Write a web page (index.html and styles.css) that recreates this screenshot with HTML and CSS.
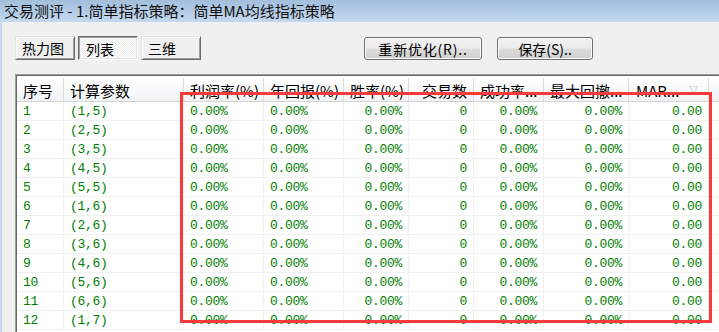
FILE: index.html
```html
<!DOCTYPE html>
<html lang="zh-CN">
  <head>
    <meta charset="UTF-8" />
    <title>交易测评</title>
    <link rel="stylesheet" href="styles.css">
  </head>
  <body>
    <div class="titlebar">交易测评 - 1.简单指标策略：简单MA均线指标策略</div>

    <div class="frame">
      <div class="toolbar">
        <button class="tab">热力图</button>
        <button class="tab tab-on">列表</button>
        <button class="tab">三维</button>
        <button class="btn btn-redo">重新优化(R)..</button>
        <button class="btn btn-save">保存(S)..</button>
      </div>

      <div class="list">
        <div class="row head">
          <div class="c">序号</div>
          <div class="c">计算参数</div>
          <div class="c">利润率(%)</div>
          <div class="c">年回报(%)</div>
          <div class="c r">胜率(%)</div>
          <div class="c r">交易数</div>
          <div class="c">成功率...</div>
          <div class="c">最大回撤...</div>
          <div class="c sort">MAR...<span class="arrow">▽</span></div>
          <div class="c"></div>
        </div>

        <div class="row"><div class="c">1</div><div class="c">(1,5)</div><div class="c">0.00%</div><div class="c">0.00%</div><div class="c r">0.00%</div><div class="c r">0</div><div class="c r">0.00%</div><div class="c r">0.00%</div><div class="c r">0.00</div><div class="c"></div></div>
        <div class="row"><div class="c">2</div><div class="c">(2,5)</div><div class="c">0.00%</div><div class="c">0.00%</div><div class="c r">0.00%</div><div class="c r">0</div><div class="c r">0.00%</div><div class="c r">0.00%</div><div class="c r">0.00</div><div class="c"></div></div>
        <div class="row"><div class="c">3</div><div class="c">(3,5)</div><div class="c">0.00%</div><div class="c">0.00%</div><div class="c r">0.00%</div><div class="c r">0</div><div class="c r">0.00%</div><div class="c r">0.00%</div><div class="c r">0.00</div><div class="c"></div></div>
        <div class="row"><div class="c">4</div><div class="c">(4,5)</div><div class="c">0.00%</div><div class="c">0.00%</div><div class="c r">0.00%</div><div class="c r">0</div><div class="c r">0.00%</div><div class="c r">0.00%</div><div class="c r">0.00</div><div class="c"></div></div>
        <div class="row"><div class="c">5</div><div class="c">(5,5)</div><div class="c">0.00%</div><div class="c">0.00%</div><div class="c r">0.00%</div><div class="c r">0</div><div class="c r">0.00%</div><div class="c r">0.00%</div><div class="c r">0.00</div><div class="c"></div></div>
        <div class="row"><div class="c">6</div><div class="c">(1,6)</div><div class="c">0.00%</div><div class="c">0.00%</div><div class="c r">0.00%</div><div class="c r">0</div><div class="c r">0.00%</div><div class="c r">0.00%</div><div class="c r">0.00</div><div class="c"></div></div>
        <div class="row"><div class="c">7</div><div class="c">(2,6)</div><div class="c">0.00%</div><div class="c">0.00%</div><div class="c r">0.00%</div><div class="c r">0</div><div class="c r">0.00%</div><div class="c r">0.00%</div><div class="c r">0.00</div><div class="c"></div></div>
        <div class="row"><div class="c">8</div><div class="c">(3,6)</div><div class="c">0.00%</div><div class="c">0.00%</div><div class="c r">0.00%</div><div class="c r">0</div><div class="c r">0.00%</div><div class="c r">0.00%</div><div class="c r">0.00</div><div class="c"></div></div>
        <div class="row"><div class="c">9</div><div class="c">(4,6)</div><div class="c">0.00%</div><div class="c">0.00%</div><div class="c r">0.00%</div><div class="c r">0</div><div class="c r">0.00%</div><div class="c r">0.00%</div><div class="c r">0.00</div><div class="c"></div></div>
        <div class="row"><div class="c">10</div><div class="c">(5,6)</div><div class="c">0.00%</div><div class="c">0.00%</div><div class="c r">0.00%</div><div class="c r">0</div><div class="c r">0.00%</div><div class="c r">0.00%</div><div class="c r">0.00</div><div class="c"></div></div>
        <div class="row"><div class="c">11</div><div class="c">(6,6)</div><div class="c">0.00%</div><div class="c">0.00%</div><div class="c r">0.00%</div><div class="c r">0</div><div class="c r">0.00%</div><div class="c r">0.00%</div><div class="c r">0.00</div><div class="c"></div></div>
        <div class="row"><div class="c">12</div><div class="c">(1,7)</div><div class="c">0.00%</div><div class="c">0.00%</div><div class="c r">0.00%</div><div class="c r">0</div><div class="c r">0.00%</div><div class="c r">0.00%</div><div class="c r">0.00</div><div class="c"></div></div>
      </div>
    </div>

    <!-- red annotation box drawn over the result columns -->
    <div class="mark"></div>
  </body>
</html>
```

FILE: styles.css
```css
body {
  margin: 0;
  width: 719px;
  height: 332px;
  overflow: hidden;
  position: relative;
  background-color: #f0f0f0;
  font-family: "Noto Sans CJK SC", sans-serif;
  color: #000;
}

.titlebar {
  height: 22px;
  line-height: 22px;
  padding-left: 4px;
  font-size: 15px;
  color: #111;
  background-image: linear-gradient(to bottom, #a2bedc 0%, #c4d9ef 100%);
  white-space: nowrap;
}

.frame {
  height: 310px;
  box-sizing: border-box;
  border-left: 2px solid #c3d8ee;
  padding: 14px 0 0 13px;
  overflow: hidden;
}

.toolbar {
  display: flex;
  align-items: flex-start;
  height: 24px;
}

button {
  font-family: "Noto Sans CJK SC", sans-serif;
  font-size: 14px;
  color: #000;
  margin: 0;
  box-sizing: border-box;
  line-height: 18px;
}

.tab {
  width: 60px;
  height: 24px;
  margin-right: 3px;
  padding: 0 0 0 6px;
  text-align: left;
  background-color: #f0f0f0;
  border: 1px solid;
  border-color: #e3e3e3 #696969 #696969 #e3e3e3;
  box-shadow: inset 1px 1px #fff, inset -1px -1px #a0a0a0;
}

.tab-on {
  padding-left: 7px;
  padding-top: 1px;
  border-color: #696969 #fff #fff #696969;
  box-shadow: inset 1px 1px #a0a0a0, inset -1px -1px #e3e3e3;
  background: repeating-conic-gradient(#fff 0 25%, #ececec 0 50%) 0 0 / 2px 2px;
}

.btn {
  height: 23px;
  margin-top: 1px;
  padding: 0;
  border: 1px solid #707070;
  border-radius: 3px;
  background-image: linear-gradient(to bottom, #f2f2f2 0%, #ebebeb 48%, #dddddd 52%, #cfcfcf 100%);
  box-shadow: inset 0 0 0 1px #fcfcfc;
}

.btn-redo {
  width: 118px;
  margin-left: 160px;
  letter-spacing: 0.8px;
}

.btn-save {
  width: 96px;
  margin-left: 15px;
}

.list {
  margin-top: 14px;
  height: 300px;
  border-top: 1px solid #a0a0a0;
  border-left: 1px solid #a0a0a0;
  box-shadow: inset 1px 1px #696969;
  padding: 3px 0 0 1px;
  background-color: #fff;
}

.row {
  display: grid;
  grid-template-columns: 47px 120px 80px 80px 65px 65px 70px 85px 80px 1fr;
  height: 19px;
}

.c {
  box-sizing: border-box;
  border-right: 1px solid #f0f0f0;
  border-bottom: 1px solid #f0f0f0;
  padding: 2px 6px 0;
  font-family: "Liberation Mono", monospace;
  font-size: 13px;
  letter-spacing: -0.3px;
  line-height: 16px;
  color: #008000;
  white-space: nowrap;
  overflow: hidden;
}

.r {
  text-align: right;
}

.head {
  height: 24px;
}

.head .c {
  padding-top: 2px;
  font-family: "Noto Sans CJK SC", sans-serif;
  font-size: 15px;
  letter-spacing: 0;
  line-height: 21px;
  color: #000;
  border-right: 1px solid #dcdcdc;
  border-bottom: 1px solid #d5d5d5;
  background-image: linear-gradient(to bottom, #ffffff 0%, #f7f8f9 60%, #f1f2f4 100%);
}

.head .sort {
  position: relative;
  padding-left: 7px;
}

.arrow {
  position: absolute;
  right: 10px;
  top: 7px;
  font-size: 9px;
  line-height: 10px;
  color: #a0a6ad;
}

.mark {
  position: absolute;
  left: 180px;
  top: 92px;
  width: 532px;
  height: 231px;
  box-sizing: border-box;
  border: 3px solid #f83a3a;
}
```
